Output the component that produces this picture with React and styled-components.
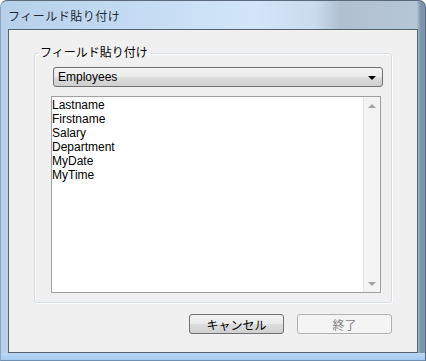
import styled, { createGlobalStyle } from "styled-components";

const GlobalStyle = createGlobalStyle`
  html, body {
    margin: 0;
    padding: 0;
    background: #ffffff;
  }
  body {
    font-family: "Liberation Sans", "Noto Sans CJK JP", sans-serif;
  }
`;

const fields = ["Lastname", "Firstname", "Salary", "Department", "MyDate", "MyTime"];

const App = () => {
  return (
    <>
      <GlobalStyle />
      <Window>
        <TitleBar>フィールド貼り付け</TitleBar>
        <Client>
          <GroupBox>
            <Legend>フィールド貼り付け</Legend>
            <Combo>
              <span>Employees</span>
              <ComboArrow />
            </Combo>
            <ListBox>
              <Items>
                {fields.map((f) => (
                  <Item key={f}>{f}</Item>
                ))}
              </Items>
              <ScrollBar>
                <ScrollBtn>
                  <Arrow $up />
                </ScrollBtn>
                <ScrollBtn>
                  <Arrow />
                </ScrollBtn>
              </ScrollBar>
            </ListBox>
          </GroupBox>
          <ButtonRow>
            <Button>キャンセル</Button>
            <Button disabled>終了</Button>
          </ButtonRow>
        </Client>
      </Window>
    </>
  );
};

export default App;

const Window = styled.div`
  width: 426px;
  height: 361px;
  box-sizing: border-box;
  display: flex;
  flex-direction: column;
  padding: 0 7px 7px 7px;
  border: 1px solid #5a6a7c;
  border-left-color: #8aa6c4;
  border-bottom-color: #6f8fb2;
  border-radius: 7px 7px 0 0;
  background:
    linear-gradient(0deg, #a6cbef 0px, #b9d8f4 7px, transparent 7px),
    linear-gradient(
      90deg,
      #b7d0ea 0%,
      #c3daf2 30%,
      #d3e6f9 60%,
      #c9dcee 74%,
      #b0c0d0 80%,
      #b5c6d6 98%,
      #7d95ae 99%,
      #7d95ae 100%
    );
  overflow: hidden;
`;

const TitleBar = styled.div`
  height: 28px;
  display: flex;
  align-items: center;
  font-size: 12px;
  color: #1e2a36;
  letter-spacing: 0.5px;
`;

const Client = styled.div`
  flex: 1;
  display: flex;
  flex-direction: column;
  background: #f0f0f0;
  border: 1px solid #55626f;
`;

const GroupBox = styled.fieldset`
  margin: 16px 25px 0 25px;
  padding: 7px 12px 9px 16px;
  border: 1px solid #d5dfe5;
  box-shadow: inset 1px 1px 0 #ffffff, 1px 1px 0 #ffffff;
  border-radius: 3px;
  display: flex;
  flex-direction: column;
  align-items: flex-start;
  gap: 9px;
  min-width: 0;
`;

const Legend = styled.legend`
  padding: 0 3px 0 2px;
  margin-left: -13px;
  font-size: 12px;
  line-height: 14px;
  color: #000000;
`;

const Combo = styled.div`
  width: 330px;
  height: 20px;
  box-sizing: border-box;
  margin-left: 2px;
  display: flex;
  align-items: center;
  justify-content: space-between;
  padding: 0 6px 0 4px;
  border: 1px solid #707070;
  border-radius: 3px;
  background: linear-gradient(#f2f2f2 0%, #ebebeb 48%, #dddddd 52%, #cfcfcf 100%);
  font-size: 12px;
  color: #000000;
`;

const ComboArrow = styled.div`
  width: 0;
  height: 0;
  border-left: 4px solid transparent;
  border-right: 4px solid transparent;
  border-top: 4px solid #000000;
  margin-top: 1px;
`;

const ListBox = styled.div`
  width: 330px;
  height: 197px;
  box-sizing: border-box;
  display: flex;
  border: 1px solid #a0a0a0;
  background: #ffffff;
`;

const Items = styled.div`
  flex: 1;
  display: flex;
  flex-direction: column;
  padding: 1px 0 0 0;
`;

const Item = styled.div`
  font-size: 12px;
  line-height: 14px;
  color: #000000;
`;

const ScrollBar = styled.div`
  width: 16px;
  display: flex;
  flex-direction: column;
  justify-content: space-between;
  background: #f3f3f3;
  border-left: 1px solid #e6e6e6;
`;

const ScrollBtn = styled.div`
  height: 17px;
  display: flex;
  align-items: center;
  justify-content: center;
`;

const Arrow = styled.div`
  width: 0;
  height: 0;
  border-left: 4px solid transparent;
  border-right: 4px solid transparent;
  ${(p) =>
    p.$up ? "border-bottom: 4px solid #a3a3a3;" : "border-top: 4px solid #a3a3a3;"}
`;

const ButtonRow = styled.div`
  display: flex;
  justify-content: flex-end;
  gap: 13px;
  margin: 11px 25px 0 0;
`;

const Button = styled.button`
  width: 95px;
  height: 20px;
  box-sizing: border-box;
  padding: 0;
  border: 1px solid ${(p) => (p.disabled ? "#adb2b5" : "#707070")};
  border-radius: 3px;
  background: ${(p) =>
    p.disabled
      ? "#f4f4f4"
      : "linear-gradient(#f2f2f2 0%, #ebebeb 48%, #dddddd 52%, #cfcfcf 100%)"};
  font-family: "Liberation Sans", "Noto Sans CJK JP", sans-serif;
  font-size: 12px;
  color: ${(p) => (p.disabled ? "#838383" : "#000000")};
`;
